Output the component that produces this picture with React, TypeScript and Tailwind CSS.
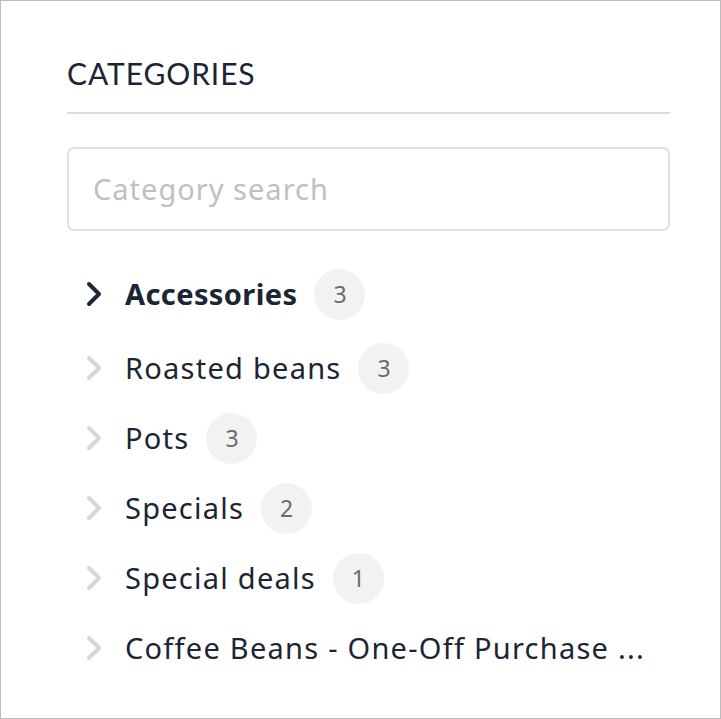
import React from "react";

const items = [
  { name: "Accessories", count: 3, active: true },
  { name: "Roasted beans", count: 3 },
  { name: "Pots", count: 3 },
  { name: "Specials", count: 2 },
  { name: "Special deals", count: 1 },
  { name: "Coffee Beans - One-Off Purchase ...", count: null },
];

function Chevron({ active }: { active?: boolean }) {
  return (
    <svg width="18" height="28" viewBox="0 0 18 28" className="shrink-0">
      <path
        d="M4 4 L14 14 L4 24"
        fill="none"
        stroke={active ? "#1d2735" : "#d6d6d6"}
        strokeWidth="4"
        strokeLinecap="round"
        strokeLinejoin="round"
      />
    </svg>
  );
}

export default function App() {
  return (
    <div className="w-[721px] h-[719px] border border-[#bdbdbd] bg-white" style={{ fontFamily: '"Noto Sans", sans-serif' }}>
      <div className="pl-[66px] pr-[50px] pt-[52px]">
        <h2 className="text-[30px] leading-[40px] text-[#1b2534] tracking-[0.9px]" style={{ fontFamily: 'Lato, sans-serif' }}>CATEGORIES</h2>
        <div className="mt-[19px] h-[2px] bg-[#dcdcdc]" />
        <div className="mt-[33px] h-[84px] rounded-[7px] border-2 border-[#e0e0e0] flex items-center px-[24px]">
          <span className="text-[29px] tracking-[1px] text-[#c0c0c0]">Category search</span>
        </div>
        <ul className="mt-[24px] flex flex-col">
          {items.map((it, i) => (
            <li key={i} className={`flex items-center ${i === 0 ? "h-[78px]" : "h-[70px]"}`}>
              <div className="w-[60px] pl-[18px] flex items-center shrink-0">
                <Chevron active={it.active} />
              </div>
              <span className={`text-[29px] text-[#1b2534] whitespace-nowrap -ml-[2px] ${it.active ? "font-bold tracking-[0.4px]" : "tracking-[1.25px]"}`}>{it.name}</span>
              {it.count !== null && (
                <span className="ml-[17px] shrink-0 w-[51px] h-[51px] rounded-full bg-[#f2f2f2] flex items-center justify-center text-[23px] text-[#6b6b6b]">
                  {it.count}
                </span>
              )}
            </li>
          ))}
        </ul>
      </div>
    </div>
  );
}
